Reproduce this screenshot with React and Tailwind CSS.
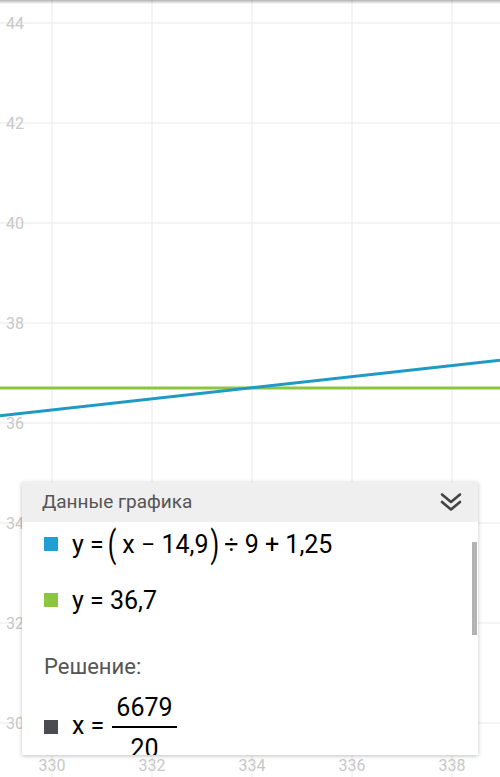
import React from 'react';

const toX = (v) => 52 + (v - 330) * 50;
const toY = (v) => 23 + (44 - v) * 50;

const ChartCanvas = () => {
  const xs = [330, 332, 334, 336, 338];
  const ys = [44, 42, 40, 38, 36, 34, 32, 30];
  const blue = (x) => (x - 14.9) / 9 + 1.25;
  const x0 = 328.96;
  const x1 = 338.96;

  return (
    <svg width="500" height="777" className="block">
      {xs.map((v) => (
        <line key={'vx' + v} x1={toX(v)} x2={toX(v)} y1="0" y2="777" stroke="#e9e9e9" strokeWidth="1" />
      ))}
      {ys.map((v) => (
        <line key={'hy' + v} x1="0" x2="500" y1={toY(v)} y2={toY(v)} stroke="#e9e9e9" strokeWidth="1" />
      ))}
      {ys.map((v) => (
        <text key={'ly' + v} x="6" y={toY(v) + 6} fontSize="16" fill="#c8c8c8" fontFamily="Roboto, sans-serif">
          {v}
        </text>
      ))}
      {xs.map((v) => (
        <text key={'lx' + v} x={toX(v)} y="771" fontSize="16" fill="#c8c8c8" textAnchor="middle" fontFamily="Roboto, sans-serif">
          {v}
        </text>
      ))}
      <line x1="0" x2="500" y1={toY(36.7)} y2={toY(36.7)} stroke="#8cc63f" strokeWidth="3" />
      <line x1="0" x2="500" y1={toY(blue(x0))} y2={toY(blue(x1))} stroke="#1f9ac4" strokeWidth="3" />
    </svg>
  );
};

const DoubleChevron = () => (
  <svg width="22" height="20" viewBox="0 0 22 20" fill="none" stroke="#444444" strokeWidth="2.6" strokeLinecap="round" strokeLinejoin="round">
    <path d="M2 2.5 L11 10 L20 2.5" />
    <path d="M2 10 L11 17.5 L20 10" />
  </svg>
);

const Paren = ({ children }) => (
  <span className="inline-block text-[25px] leading-none scale-y-[1.45] origin-center">{children}</span>
);

export default function App() {
  return (
    <div className="relative w-[500px] h-[777px] bg-white overflow-hidden font-['Roboto',sans-serif]">
      <ChartCanvas />

      <div className="absolute top-0 left-0 right-0 h-[4px] bg-gradient-to-b from-black/30 to-transparent" />

      <div className="absolute left-[22px] top-[482px] w-[456px] h-[273px] bg-white flex flex-col shadow-[0_1px_4px_rgba(0,0,0,0.25)]">
        <div className="h-[40px] shrink-0 bg-[#efefef] flex items-center justify-between pl-[20px] pr-[16px]">
          <span className="text-[19px] text-[#555555]">Данные графика</span>
          <DoubleChevron />
        </div>

        <div className="relative flex-1 overflow-hidden">
          <div className="flex flex-col pl-[22px] text-black">
            <div className="h-[44px] flex items-center gap-[14px]">
              <span className="w-[14px] h-[14px] bg-[#1f9fd4] shrink-0" />
              <span className="text-[25px] leading-none flex items-center">
                <span>y =</span>
                <span className="ml-[4px]"><Paren>(</Paren></span>
                <span className="ml-[6px]">x − 14,9</span>
                <span className="ml-[2px]"><Paren>)</Paren></span>
                <span className="ml-[5px]">÷ 9 + 1,25</span>
              </span>
            </div>

            <div className="h-[44px] mt-[12px] flex items-center gap-[14px]">
              <span className="w-[14px] h-[14px] bg-[#8cc63f] shrink-0" />
              <span className="text-[25px] leading-none">y = 36,7</span>
            </div>

            <div className="mt-[31px] text-[22px] leading-[28px] text-[#555555]">Решение:</div>

            <div className="mt-[14px] flex items-start">
              <span className="w-[14px] h-[14px] bg-[#4b4b52] shrink-0 mt-[25px]" />
              <span className="text-[25px] leading-none mt-[18px] ml-[14px]">x =</span>
              <span className="flex flex-col items-center ml-[8px]">
                <span className="text-[25px] leading-[26px] px-[4px]">6679</span>
                <span className="h-[2px] w-full bg-black mt-[5px]" />
                <span className="text-[25px] leading-[26px] mt-[8px]">20</span>
              </span>
            </div>
          </div>

          <div className="absolute right-[1px] top-[20px] w-[5px] h-[93px] bg-[#b3b3b3]" />
        </div>
      </div>
    </div>
  );
}
